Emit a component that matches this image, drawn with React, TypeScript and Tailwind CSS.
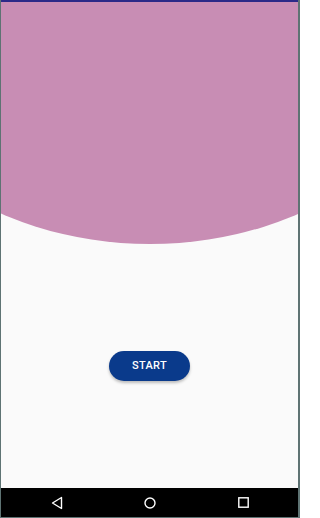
import React from 'react'

export default function App() {
  return (
    <div className="flex h-[518px] w-[300px] flex-col border-l border-r-2 border-b border-[#5e7373] bg-[#fafafa] font-['Roboto',sans-serif]">
      {/* status strip */}
      <div className="h-[2px] shrink-0 bg-[#2b2a88]" />

      <main className="flex flex-1 flex-col items-center overflow-hidden">
        {/* header blob */}
        <div className="h-[242px] w-full shrink-0 overflow-hidden">
          <div className="ml-[-151px] mt-[-220px] h-[462px] w-[600px] rounded-[50%] bg-[#c88db4]" />
        </div>

        <button
          type="button"
          className="mt-[107px] flex h-[30px] w-[81px] items-center justify-center rounded-full bg-[#0a3a8b] text-[11px] font-medium tracking-wide text-white shadow-[0_2px_3px_rgba(0,0,0,0.25)]"
        >
          START
        </button>
      </main>

      {/* nav bar */}
      <nav className="flex h-[29px] shrink-0 items-center bg-black pl-[7px]">
        <div className="flex w-[98px] justify-center">
          <svg width="12" height="14" viewBox="0 0 12 14" fill="none">
            <path d="M10.5 1.5 L1.5 7 L10.5 12.5 Z" stroke="white" strokeWidth="1.4" strokeLinejoin="round" />
          </svg>
        </div>
        <div className="flex w-[88px] justify-center">
          <svg width="12" height="12" viewBox="0 0 12 12" fill="none">
            <circle cx="6" cy="6" r="5" stroke="white" strokeWidth="1.4" />
          </svg>
        </div>
        <div className="flex w-[98px] justify-center">
          <svg width="11" height="11" viewBox="0 0 11 11" fill="none">
            <rect x="0.8" y="0.8" width="9.4" height="9.4" stroke="white" strokeWidth="1.4" />
          </svg>
        </div>
      </nav>
    </div>
  )
}
